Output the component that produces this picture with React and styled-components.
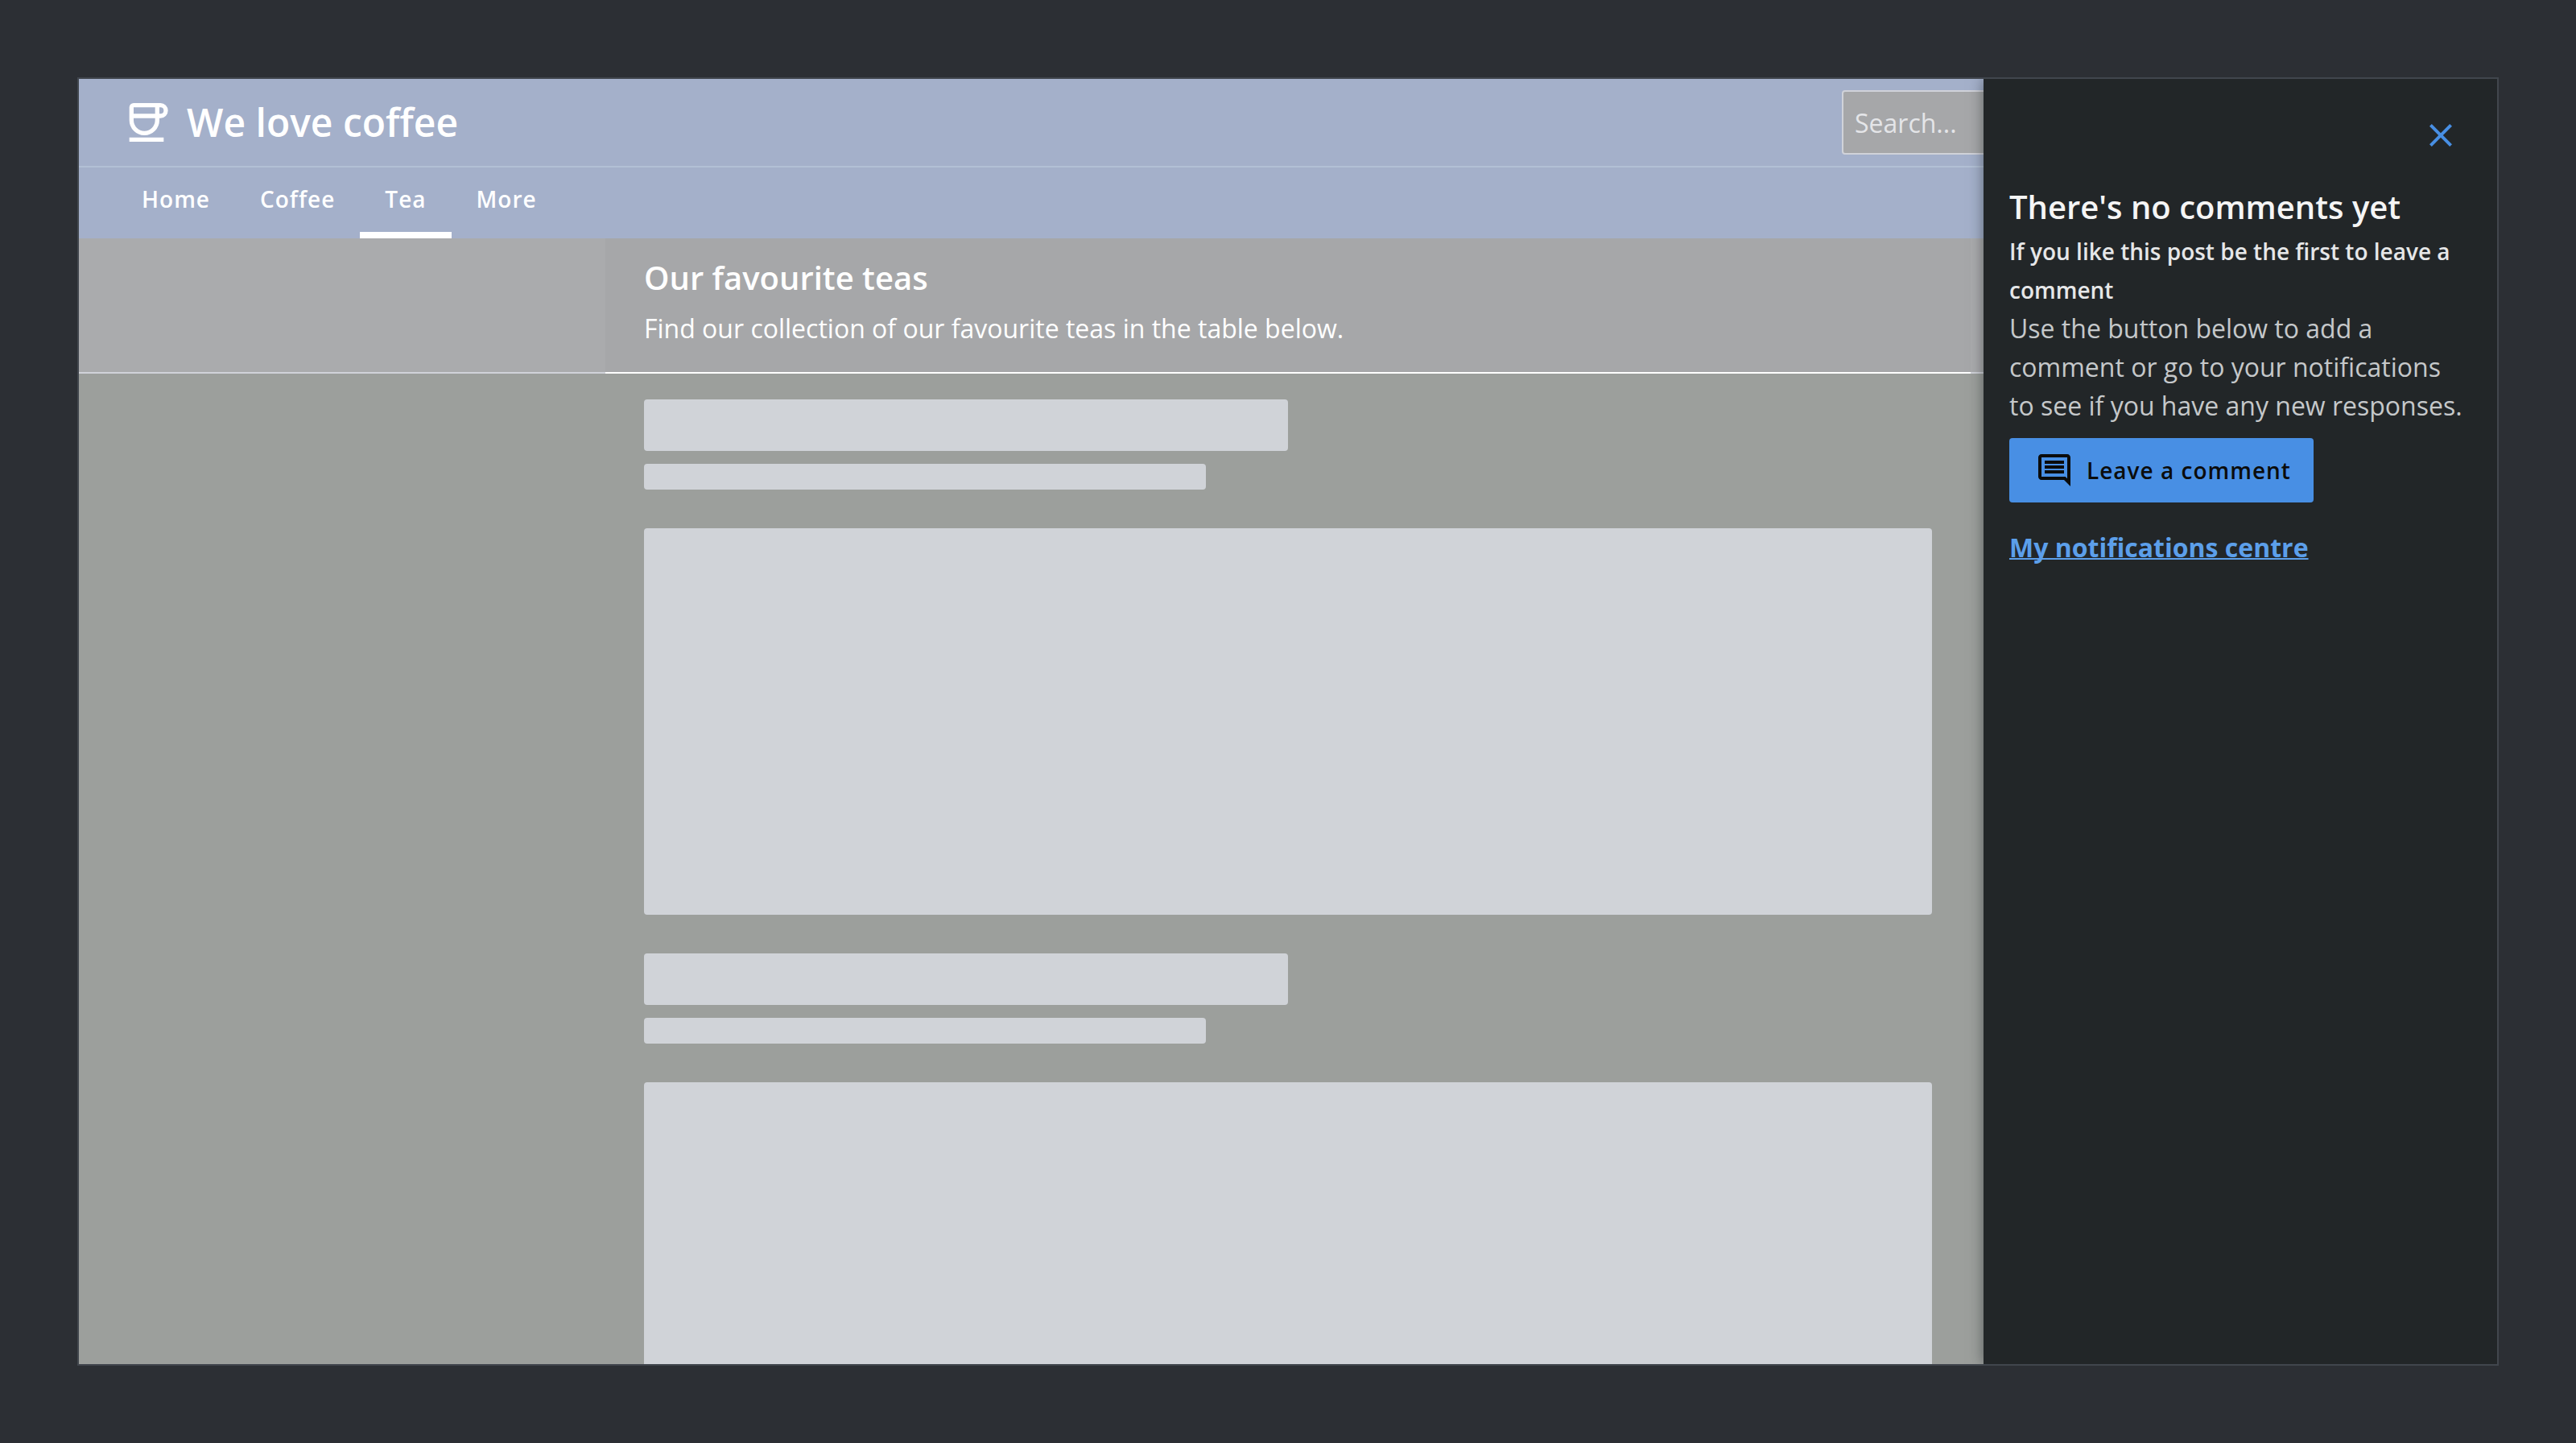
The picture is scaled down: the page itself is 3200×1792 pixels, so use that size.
import React from "react";
import styled, { createGlobalStyle, css } from "styled-components";

const GlobalStyle = createGlobalStyle`
  *, *::before, *::after { box-sizing: border-box; }
  html, body, #root { height: 100%; }
  body {
    margin: 0;
    background: #2c2f34;
    color: #ffffff;
    font-family: "Open Sans", "Noto Sans", sans-serif;
    font-size: 32px;
    line-height: 48px;
  }
  h1, h2, h3, p { margin: 0; }
`;

const Page = styled.div`
  height: 100%;
  padding: 96px;
`;

const Frame = styled.div`
  position: relative;
  height: 100%;
  border: 2px solid #41464d;
  background: #9c9f9c;
  overflow: hidden;
  display: flex;
  flex-direction: column;
`;

const TopBar = styled.header`
  background: #a4b0ca;
  flex: none;
`;

const BrandRow = styled.div`
  display: flex;
  align-items: center;
  justify-content: space-between;
  height: 110px;
  padding: 0 56px 0 52px;
  border-bottom: 2px solid #b2c0d5;
`;

const Brand = styled.a`
  display: flex;
  align-items: center;
  gap: 18px;
  color: inherit;
  text-decoration: none;
`;

const BrandName = styled.h1`
  font-size: 48px;
  line-height: 56px;
  font-weight: 600;
`;

const SearchBox = styled.input`
  width: 758px;
  height: 80px;
  padding: 0 14px;
  border: 2px solid #d0d2d9;
  border-radius: 4px;
  background: #a6a7a9;
  color: #ffffff;
  font: inherit;
  &::placeholder { color: #e4e5e8; opacity: 1; }
`;

const Tabs = styled.nav`
  display: flex;
  height: 88px;
  padding: 0 47px;
`;

const Tab = styled.a`
  padding: 15px 31px 0;
  font-size: 28px;
  line-height: 48px;
  font-weight: 600;
  letter-spacing: 1px;
  color: inherit;
  text-decoration: none;
  ${(p) => p.$active && css`border-bottom: 8px solid #ffffff;`}
`;

const Banner = styled.section`
  flex: none;
  display: flex;
  justify-content: center;
  background: #aaabad;
  border-bottom: 2px solid #d0d2d9;
`;

const BannerInner = styled.div`
  width: 1696px;
  margin-bottom: -2px;
  padding: 20px 48px 30px;
  background: #a6a7a9;
  border-bottom: 2px solid #ffffff;
`;

const BannerTitle = styled.h2`
  font-size: 40px;
  line-height: 58px;
  font-weight: 600;
`;

const BannerText = styled.p`
  padding-top: 10px;
`;

const Content = styled.main`
  width: 1600px;
  margin: 0 auto;
  padding-top: 32px;
`;

const Placeholder = styled.div`
  display: flex;
  flex-direction: column;
  gap: 16px;
  margin-bottom: 48px;
`;

const Bone = styled.div`
  width: ${(p) => p.$width};
  height: ${(p) => p.$height}px;
  margin-top: ${(p) => (p.$spaced ? 32 : 0)}px;
  border-radius: 4px;
  background: #d0d3d8;
`;

const Drawer = styled.aside`
  position: absolute;
  top: 0;
  right: 0;
  bottom: 0;
  width: 638px;
  padding: 32px;
  background: #222628;
  box-shadow: 0 0 16px rgba(20, 25, 30, 0.5);
  display: flex;
  flex-direction: column;
  align-items: flex-start;
`;

const CloseButton = styled.button`
  align-self: flex-end;
  display: flex;
  width: 76px;
  height: 76px;
  padding: 14px;
  border: 0;
  background: none;
  color: #488fe4;
`;

const DrawerTitle = styled.h2`
  padding: 22px 0 2px;
  font-size: 40px;
  line-height: 58px;
  font-weight: 600;
  color: #f5f5f5;
`;

const DrawerSubtitle = styled.h3`
  font-size: 28px;
  line-height: 48px;
  font-weight: 600;
  color: #e6e7e8;
`;

const DrawerText = styled.p`
  color: #c5c8ca;
`;

const PrimaryButton = styled.button`
  display: flex;
  align-items: center;
  gap: 16px;
  height: 80px;
  margin: 16px 0 32px;
  padding: 0 28px 0 32px;
  border: 0;
  border-radius: 4px;
  background: #488fe4;
  color: #0b0c0c;
  font: 600 28px/48px "Open Sans", "Noto Sans", sans-serif;
  letter-spacing: 1px;
`;

const DrawerLink = styled.a`
  font-weight: 700;
  color: #5c9fea;
  text-decoration: underline;
  text-decoration-thickness: 2px;
  text-decoration-skip-ink: none;
`;

const CupIcon = () => (
  <svg width="64" height="64" viewBox="0 0 24 24" fill="none" stroke="currentColor" strokeWidth="2" aria-hidden="true">
    <path d="M5 5a1 1 0 0 1 1-1h11v7a6 6 0 0 1-12 0z" />
    <path d="M5 9h12" />
    <path d="M17 4h1.5a2.5 2.5 0 0 1 0 5H17" />
    <path d="M4 20h16" />
  </svg>
);

const CloseIcon = () => (
  <svg width="48" height="48" viewBox="0 0 24 24" fill="currentColor" aria-hidden="true">
    <path d="M19 6.41L17.59 5 12 10.59 6.41 5 5 6.41 10.59 12 5 17.59 6.41 19 12 13.41 17.59 19 19 17.59 13.41 12z" />
  </svg>
);

const CommentIcon = () => (
  <svg width="48" height="48" viewBox="0 0 24 24" fill="currentColor" aria-hidden="true">
    <path d="M21.99 4c0-1.1-.89-2-1.99-2H4c-1.1 0-2 .9-2 2v12c0 1.1.9 2 2 2h14l4 4-.01-18zM20 4v13.17L18.83 16H4V4h16zM6 12h12v2H6zm0-3h12v2H6zm0-3h12v2H6z" />
  </svg>
);

const tabs = ["Home", "Coffee", "Tea", "More"];

const Skeleton = () => (
  <Placeholder>
    <Bone $width="50%" $height={64} />
    <Bone $width="698px" $height={32} />
    <Bone $width="100%" $height={480} $spaced />
  </Placeholder>
);

export default function App() {
  return (
    <>
      <GlobalStyle />
      <Page>
        <Frame>
          <TopBar>
            <BrandRow>
              <Brand href="#">
                <CupIcon />
                <BrandName>We love coffee</BrandName>
              </Brand>
              <SearchBox type="search" placeholder="Search..." aria-label="Search" />
            </BrandRow>
            <Tabs>
              {tabs.map((name) => (
                <Tab key={name} href="#" $active={name === "Tea"}>{name}</Tab>
              ))}
            </Tabs>
          </TopBar>
          <Banner>
            <BannerInner>
              <BannerTitle>Our favourite teas</BannerTitle>
              <BannerText>Find our collection of our favourite teas in the table below.</BannerText>
            </BannerInner>
          </Banner>
          <Content>
            <Skeleton />
            <Skeleton />
          </Content>
          <Drawer>
            <CloseButton type="button" aria-label="Close"><CloseIcon /></CloseButton>
            <DrawerTitle>There's no comments yet</DrawerTitle>
            <DrawerSubtitle>If you like this post be the first to leave a comment</DrawerSubtitle>
            <DrawerText>
              Use the button below to add a comment or go to your notifications to see if you have any new responses.
            </DrawerText>
            <PrimaryButton type="button"><CommentIcon />Leave a comment</PrimaryButton>
            <DrawerLink href="#">My notifications centre</DrawerLink>
          </Drawer>
        </Frame>
      </Page>
    </>
  );
}
